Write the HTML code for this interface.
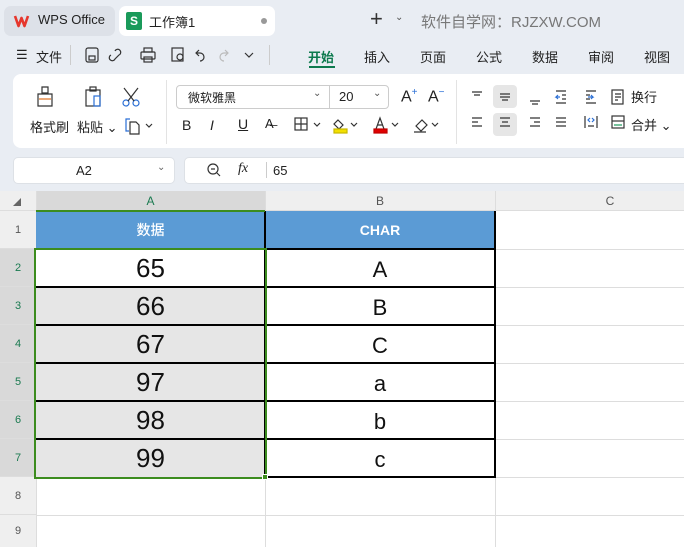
<!DOCTYPE html>
<html><head><meta charset="utf-8"><style>
*{margin:0;padding:0;box-sizing:border-box}
body{width:684px;height:547px;overflow:hidden;background:#e9edf3;font-family:"Liberation Sans","Noto Sans CJK SC",sans-serif;position:relative;color:#222}
.a{position:absolute}
.t{font-size:13px;white-space:nowrap}
svg{position:absolute;overflow:visible}
.ic{stroke:#333;stroke-width:1.2;fill:none}
.cell{position:absolute;display:flex;align-items:center;justify-content:center;white-space:nowrap}
.rh{position:absolute;left:0;width:36px;font-size:11px;color:#555;display:flex;align-items:center;justify-content:center;background:#efefef;border-bottom:1px solid #ddd}
</style></head><body>
<!-- tabs -->
<div class="a" style="left:4px;top:6px;width:111px;height:30px;background:#dde1e8;border-radius:7px"></div>
<div class="a" style="left:13px;top:12px;width:17px;height:17px;"><svg width="17" height="17"><path d="M2 4 L5.5 14 L8.5 6 L11.5 14 L15 4" stroke="#e6372d" stroke-width="2.6" fill="none" stroke-linejoin="round"/></svg></div>
<div class="a t" style="left:38px;top:12px;font-size:13px">WPS Office</div>
<div class="a" style="left:119px;top:6px;width:156px;height:30px;background:#fff;border-radius:7px"></div>
<div class="a" style="left:126px;top:12px;width:16px;height:18px;background:#1a9a5a;border-radius:2px;color:#fff;font-size:12px;font-weight:bold;text-align:center;line-height:18px">S</div>
<div class="a t" style="left:149px;top:12px">工作簿1</div>
<div class="a" style="left:261px;top:18px;width:6px;height:6px;border-radius:3px;background:#999"></div>
<div class="a t" style="left:370px;top:6px;font-size:22px;color:#333">+</div>
<div class="a t" style="left:395px;top:12px;font-size:10px;color:#555">⌄</div>
<div class="a t" style="left:421px;top:11px;font-size:15px;color:#777">软件自学网：RJZXW.COM</div>
<!-- menu row -->
<div class="a t" style="left:16px;top:47px;font-size:13px">☰</div>
<div class="a t" style="left:36px;top:47px">文件</div>
<div class="a" style="left:70px;top:45px;width:1px;height:20px;background:#ccc"></div>
<svg style="left:85px;top:46px" width="160" height="18" class="ic">
<rect x="1" y="2" width="12" height="14" rx="2"/><rect x="4" y="10" width="6" height="4"/>
<path d="M30 5 a3 3 0 1 1 4 4 l-4 4 a3 3 0 1 1-4-4"/>
<rect x="56" y="6" width="14" height="7" rx="1"/><rect x="59" y="2" width="8" height="4"/><rect x="59" y="11" width="8" height="5"/>
<rect x="87" y="2" width="11" height="13"/><circle cx="95" cy="11" r="3"/>
<path d="M114 4 l-3 3 l3 3 M111 7 h4 a4 4 0 0 1 0 8"/>
<path d="M140 4 l3 3 l-3 3 M143 7 h-4 a4 4 0 0 0 0 8" stroke="#bbb"/>
<path d="M160 7 l4 4 l4-4"/>
</svg>
<div class="a" style="left:269px;top:45px;width:1px;height:20px;background:#ccc"></div>
<div class="a t" style="left:308px;top:47px;font-weight:bold;color:#0d7a4e">开始</div>
<div class="a" style="left:309px;top:66px;width:26px;height:2px;background:#0d7a4e"></div>
<div class="a t" style="left:364px;top:47px">插入</div>
<div class="a t" style="left:420px;top:47px">页面</div>
<div class="a t" style="left:476px;top:47px">公式</div>
<div class="a t" style="left:532px;top:47px">数据</div>
<div class="a t" style="left:588px;top:47px">审阅</div>
<div class="a t" style="left:644px;top:47px">视图</div>
<!-- ribbon -->
<div class="a" style="left:13px;top:74px;width:680px;height:74px;background:#fff;border-radius:8px"></div>
<svg style="left:36px;top:86px" width="120" height="22" class="ic">
<path d="M6 1 h6 v6 h-6z M2 8 h14 v12 h-14z"/><path d="M3 13 h12" stroke="#e07020"/>
<rect x="50" y="4" width="14" height="16"/><rect x="54" y="1" width="6" height="4"/><rect x="58" y="10" width="6" height="10" stroke="#2a6fd6"/>
<circle cx="90" cy="17" r="3" stroke="#2a6fd6"/><circle cx="100" cy="17" r="3" stroke="#2a6fd6"/><path d="M88 2 l10 13 M102 2 l-10 13"/>
</svg>
<div class="a t" style="left:30px;top:117px">格式刷</div>
<div class="a t" style="left:77px;top:117px">粘贴 ⌄</div>
<svg style="left:124px;top:117px" width="30" height="18" class="ic"><path d="M6 2 h-4 v12 h3" stroke="#2a6fd6"/><path d="M6 5 h6 l3 3 v9 h-9z"/><path d="M22 7 l3 3 l3-3"/></svg>
<div class="a" style="left:166px;top:80px;width:1px;height:64px;background:#e3e3e3"></div>
<div class="a" style="left:176px;top:85px;width:213px;height:24px;border:1px solid #ccc;border-radius:4px"></div>
<div class="a" style="left:329px;top:86px;width:1px;height:22px;background:#ccc"></div>
<div class="a t" style="left:188px;top:89px;font-size:12px">微软雅黑</div>
<div class="a t" style="left:313px;top:88px;font-size:10px;color:#555">⌄</div>
<div class="a t" style="left:339px;top:89px;font-size:13px">20</div>
<div class="a t" style="left:373px;top:88px;font-size:10px;color:#555">⌄</div>
<div class="a t" style="left:401px;top:87px;font-size:16px">A<sup style="font-size:10px;color:#2a6fd6">+</sup></div>
<div class="a t" style="left:428px;top:87px;font-size:16px">A<sup style="font-size:10px;color:#2a6fd6">−</sup></div>
<div class="a t" style="left:182px;top:117px;font-size:14px">B</div>
<div class="a t" style="left:210px;top:117px;font-size:14px;font-style:italic">I</div>
<div class="a t" style="left:238px;top:116px;font-size:14px;text-decoration:underline">U</div>
<div class="a t" style="left:265px;top:116px;font-size:13px">A̶</div>
<svg style="left:294px;top:117px" width="160" height="20" class="ic">
<rect x="1" y="1" width="12" height="12"/><path d="M7 1 v12 M1 7 h12 M20 6 l3 3 l3-3"/>
<path d="M44 3 l5 5 l-4 4 l-5-5z"/><rect x="40" y="12" width="13" height="4" fill="#f3e000" stroke="#c8b800"/><path d="M57 6 l3 3 l3-3"/>
<path d="M82 12 l4-11 l4 11 M83.5 8 h5"/><rect x="80" y="12" width="13" height="4" fill="#e00000" stroke="#c00000"/><path d="M98 6 l3 3 l3-3"/>
<path d="M122 9 l6-6 l5 5 l-6 6z M120 15 h12"/><path d="M138 6 l3 3 l3-3"/>
</svg>
<div class="a" style="left:456px;top:80px;width:1px;height:64px;background:#e3e3e3"></div>
<div class="a" style="left:493px;top:85px;width:24px;height:23px;background:#e6e6e6;border-radius:4px"></div>
<div class="a" style="left:493px;top:113px;width:24px;height:23px;background:#e6e6e6;border-radius:4px"></div>
<svg style="left:470px;top:89px" width="160" height="45" class="ic">
<path d="M2 3 h10 M4 6 h6"/><path d="M30 5 h10 M30 8 h10 M32 11 h6"/><path d="M60 12 h10 M62 15 h6"/>
<path d="M86 2 h10 M92 6 h4 M92 10 h4 M86 14 h10" /><path d="M90 8 h-4 l2-2 M86 8 l2 2" stroke="#2a6fd6"/>
<path d="M116 2 h10 M116 6 h4 M116 10 h4 M116 14 h10"/><path d="M118 8 h5 l-2-2 M123 8 l-2 2" stroke="#2a6fd6"/>
<rect x="142" y="1" width="11" height="14"/><path d="M145 5 h6 M145 8 h6 M145 11 h3"/>
<path d="M2 29 h10 M2 33 h6 M2 37 h10"/><path d="M30 29 h10 M32 33 h6 M30 37 h10"/><path d="M60 29 h10 M64 33 h6 M60 37 h10"/><path d="M86 29 h10 M86 33 h10 M86 37 h10"/>
<path d="M115 27 v12 M127 27 v12 M118 37 h6"/><path d="M120 29 l-2 2 l2 2 M122 29 l2 2 l-2 2" stroke="#2a6fd6"/>
<rect x="142" y="27" width="12" height="12"/><path d="M142 32 h12"/><path d="M144 36 h8" stroke="#1a9a5a"/>
</svg>
<div class="a t" style="left:631px;top:87px">换行</div>
<div class="a t" style="left:631px;top:115px">合并 ⌄</div>
<!-- formula bar -->
<div class="a" style="left:13px;top:157px;width:162px;height:27px;background:#fff;border:1px solid #dde1e6;border-radius:5px"></div>
<div class="a t" style="left:76px;top:163px;font-size:13px">A2</div>
<div class="a t" style="left:157px;top:162px;font-size:10px;color:#666">⌄</div>
<div class="a" style="left:184px;top:157px;width:510px;height:27px;background:#fff;border:1px solid #dde1e6;border-radius:5px"></div>
<svg style="left:207px;top:163px" width="14" height="14" class="ic"><circle cx="6" cy="6" r="5"/><path d="M4 6 h4 M10 10 l3 3"/></svg>
<div class="a t" style="left:238px;top:161px;font-size:14px;font-style:italic;font-family:'Liberation Serif',serif">fx</div>
<div class="a" style="left:266px;top:162px;width:1px;height:16px;background:#ccc"></div>
<div class="a t" style="left:273px;top:163px;font-size:13px">65</div>
<!-- grid -->
<div class="a" style="left:0;top:191px;width:684px;height:356px;background:#fff"></div>
<div class="a" style="left:0;top:191px;width:684px;height:20px;background:#efefef;border-bottom:1px solid #ddd"></div>
<div class="a" style="left:36px;top:191px;width:229px;height:20px;background:#d9d9d9"></div>
<div class="a t" style="left:13px;top:197px;font-size:8px;color:#666">◢</div>
<div class="cell" style="left:36px;top:191px;width:229px;height:20px;font-size:12px;color:#1a7a50">A</div>
<div class="a" style="left:265px;top:191px;width:1px;height:356px;background:#ddd"></div>
<div class="cell" style="left:265px;top:191px;width:230px;height:20px;font-size:12px;color:#555">B</div>
<div class="a" style="left:495px;top:191px;width:1px;height:356px;background:#ddd"></div>
<div class="cell" style="left:495px;top:191px;width:230px;height:20px;font-size:12px;color:#555">C</div>
<div class="a" style="left:36px;top:191px;width:1px;height:356px;background:#ddd"></div>
<!-- row headers -->
<div class="rh" style="top:211px;height:38px">1</div>
<div class="rh" style="top:249px;height:38px;background:#d9d9d9;color:#1a7a50">2</div>
<div class="rh" style="top:287px;height:38px;background:#d9d9d9;color:#1a7a50">3</div>
<div class="rh" style="top:325px;height:38px;background:#d9d9d9;color:#1a7a50">4</div>
<div class="rh" style="top:363px;height:38px;background:#d9d9d9;color:#1a7a50">5</div>
<div class="rh" style="top:401px;height:38px;background:#d9d9d9;color:#1a7a50">6</div>
<div class="rh" style="top:439px;height:38px;background:#d9d9d9;color:#1a7a50">7</div>
<div class="rh" style="top:477px;height:38px">8</div>
<div class="rh" style="top:515px;height:32px;border-bottom:none">9</div>
<!-- C column row lines -->
<div class="a" style="left:495px;top:249px;width:189px;height:1px;background:#ddd"></div>
<div class="a" style="left:495px;top:287px;width:189px;height:1px;background:#ddd"></div>
<div class="a" style="left:495px;top:325px;width:189px;height:1px;background:#ddd"></div>
<div class="a" style="left:495px;top:363px;width:189px;height:1px;background:#ddd"></div>
<div class="a" style="left:495px;top:401px;width:189px;height:1px;background:#ddd"></div>
<div class="a" style="left:495px;top:439px;width:189px;height:1px;background:#ddd"></div>
<div class="a" style="left:36px;top:477px;width:648px;height:1px;background:#ddd"></div>
<div class="a" style="left:36px;top:515px;width:648px;height:1px;background:#ddd"></div>
<!-- header row -->
<div class="cell" style="left:36px;top:211px;width:229px;height:38px;background:#5b9bd5;color:#fff;font-weight:500;font-size:14px">数据</div>
<div class="cell" style="left:265px;top:211px;width:230px;height:38px;background:#5b9bd5;color:#fff;font-weight:bold;font-size:14px">CHAR</div>
<!-- A cells -->
<div class="cell" style="left:36px;top:249px;width:229px;height:38px;background:#fff;font-size:26px;color:#111">65</div>
<div class="cell" style="left:36px;top:287px;width:229px;height:38px;background:#e6e6e6;font-size:26px;color:#111">66</div>
<div class="cell" style="left:36px;top:325px;width:229px;height:38px;background:#e6e6e6;font-size:26px;color:#111">67</div>
<div class="cell" style="left:36px;top:363px;width:229px;height:38px;background:#e6e6e6;font-size:26px;color:#111">97</div>
<div class="cell" style="left:36px;top:401px;width:229px;height:38px;background:#e6e6e6;font-size:26px;color:#111">98</div>
<div class="cell" style="left:36px;top:439px;width:229px;height:38px;background:#e6e6e6;font-size:26px;color:#111">99</div>
<!-- B cells -->
<div class="cell" style="left:265px;top:249px;width:230px;height:38px;font-size:22px;padding-top:4px;color:#111">A</div>
<div class="cell" style="left:265px;top:287px;width:230px;height:38px;font-size:22px;padding-top:4px;color:#111">B</div>
<div class="cell" style="left:265px;top:325px;width:230px;height:38px;font-size:22px;padding-top:4px;color:#111">C</div>
<div class="cell" style="left:265px;top:363px;width:230px;height:38px;font-size:22px;padding-top:4px;color:#111">a</div>
<div class="cell" style="left:265px;top:401px;width:230px;height:38px;font-size:22px;padding-top:4px;color:#111">b</div>
<div class="cell" style="left:265px;top:439px;width:230px;height:38px;font-size:22px;padding-top:4px;color:#111">c</div>
<!-- black borders -->
<div class="a" style="left:264px;top:211px;width:2px;height:267px;background:#000"></div>
<div class="a" style="left:494px;top:211px;width:2px;height:267px;background:#000"></div>
<div class="a" style="left:36px;top:248px;width:460px;height:2px;background:#000"></div>
<div class="a" style="left:36px;top:286px;width:460px;height:2px;background:#000"></div>
<div class="a" style="left:36px;top:324px;width:460px;height:2px;background:#000"></div>
<div class="a" style="left:36px;top:362px;width:460px;height:2px;background:#000"></div>
<div class="a" style="left:36px;top:400px;width:460px;height:2px;background:#000"></div>
<div class="a" style="left:36px;top:438px;width:460px;height:2px;background:#000"></div>
<div class="a" style="left:265px;top:476px;width:231px;height:2px;background:#000"></div>
<!-- selection -->
<div class="a" style="left:36px;top:210px;width:229px;height:2px;background:#3c8c1e"></div>
<div class="a" style="left:34px;top:248px;width:233px;height:231px;border:2px solid #3c8c1e"></div>
<div class="a" style="left:262px;top:474px;width:6px;height:6px;background:#3c8c1e;border:1px solid #fff"></div>
</body></html>
